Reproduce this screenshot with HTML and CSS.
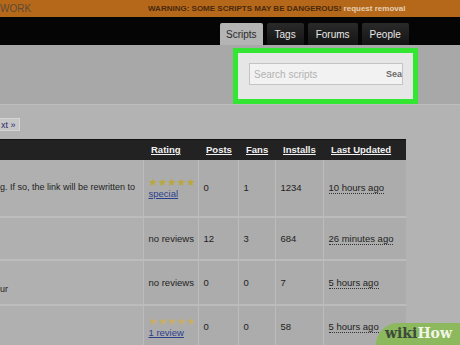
FILE: index.html
```html
<!DOCTYPE html>
<html lang="en">
<head>
  <meta charset="UTF-8">
  <title>Scripts</title>
  <link rel="stylesheet" href="styles.css">
</head>
<body>
  <!-- Warning bar -->
  <div class="topbar">
    <span class="site">WORK</span>
    <span class="warning">WARNING: SOME SCRIPTS MAY BE DANGEROUS! <a href="#" class="removal">request removal</a></span>
  </div>

  <!-- Navigation tabs -->
  <div class="nav">
    <a href="#" class="tab active">Scripts</a>
    <a href="#" class="tab">Tags</a>
    <a href="#" class="tab">Forums</a>
    <a href="#" class="tab">People</a>
  </div>

  <!-- Search -->
  <div class="search-band">
    <div class="highlight">
      <div class="search-box">
        <input type="text" class="search-input" placeholder="Search scripts">
        <span class="search-btn">Sea</span>
      </div>
    </div>
  </div>

  <div class="pager">
    <a href="#" class="next-btn">xt »</a>
  </div>

  <!-- Script listing -->
  <table class="scripts">
    <thead>
      <tr>
        <th class="col-desc"></th>
        <th class="col-rating"><a href="#">Rating</a></th>
        <th class="col-posts"><a href="#">Posts</a></th>
        <th class="col-fans"><a href="#">Fans</a></th>
        <th class="col-installs"><a href="#">Installs</a></th>
        <th class="col-updated"><a href="#">Last Updated</a></th>
      </tr>
    </thead>
    <tbody>
      <tr class="row-1">
        <td class="desc">g. If so, the link will be rewritten to</td>
        <td><span class="stars">★★★★★</span><br><a href="#">special</a></td>
        <td>0</td>
        <td>1</td>
        <td>1234</td>
        <td><abbr>10 hours ago</abbr></td>
      </tr>
      <tr class="row-2">
        <td class="desc"></td>
        <td>no reviews</td>
        <td>12</td>
        <td>3</td>
        <td>684</td>
        <td><abbr>26 minutes ago</abbr></td>
      </tr>
      <tr class="row-3">
        <td class="desc"><span class="desc-low">ur</span></td>
        <td>no reviews</td>
        <td>0</td>
        <td>0</td>
        <td>7</td>
        <td><abbr>5 hours ago</abbr></td>
      </tr>
      <tr class="row-4">
        <td class="desc"></td>
        <td><span class="stars pale">★★★★★</span><br><a href="#">1 review</a></td>
        <td>0</td>
        <td>0</td>
        <td>58</td>
        <td><abbr>5 hours ago</abbr></td>
      </tr>
    </tbody>
  </table>

  <div class="wikihow"><span class="wiki">wiki</span><span class="how">How</span></div>
</body>
</html>
```

FILE: styles.css
```css
* {
  margin: 0;
  padding: 0;
  box-sizing: border-box;
}

body {
  width: 460px;
  height: 345px;
  overflow: hidden;
  position: relative;
  font-family: "Liberation Sans", Arial, sans-serif;
  font-size: 9px;
  background: #b3b3b3;
  color: #1e1e1e;
}

a {
  color: inherit;
}

/* Warning bar */
.topbar {
  height: 17px;
  background: #b5681a;
  display: flex;
  align-items: center;
}

.site {
  color: #5e4a34;
  width: 148px;
  font-size: 10px;
}

.warning {
  color: #4a2a0c;
  font-weight: bold;
  font-size: 8px;
  white-space: nowrap;
}

.removal {
  color: #e6cfb4;
  text-decoration: none;
}

/* Navigation */
.nav {
  height: 28px;
  background: #050505;
  display: flex;
  align-items: flex-end;
  gap: 4px;
  padding-left: 220px;
}

.tab {
  height: 22px;
  padding: 0 8px;
  display: flex;
  align-items: center;
  background: linear-gradient(#2a2a2a, #141414);
  color: #e8e8e8;
  text-decoration: none;
  font-size: 10px;
  border-radius: 2px 2px 0 0;
}

.tab.active {
  background: #b4b4b4;
  color: #2a2a2a;
  padding: 0 6px;
}

/* Search */
.search-band {
  height: 60px;
  background: #a8a8a8;
  border-bottom: 1px solid #bdbdbd;
  padding: 3px 0 0 233px;
}

.highlight {
  width: 185px;
  height: 56px;
  border: 5px solid #33e633;
  background: #e6e6e6;
  padding: 10px 0 0 11px;
}

.search-box {
  width: 154px;
  height: 22px;
  background: #f2f2f2;
  border: 1px solid #c4c4c4;
  display: flex;
  align-items: center;
  overflow: hidden;
}

.search-input {
  width: 138px;
  height: 100%;
  border: none;
  background: none;
  padding-left: 4px;
  font-family: inherit;
  font-size: 10px;
  outline: none;
}

.search-input::placeholder {
  color: #b2b2b2;
}

.search-btn {
  color: #6a6a6a;
  font-weight: bold;
  font-size: 9px;
  white-space: nowrap;
}

/* Pager */
.pager {
  height: 34px;
  padding-top: 13px;
  display: flex;
}

.next-btn {
  height: 13px;
  display: flex;
  align-items: center;
  margin-left: -3px;
  padding: 0 3px;
  background: #c6c6c6;
  border: 1px solid #d4d4d4;
  color: #2b2b6e;
  text-decoration: none;
  font-size: 9px;
}

/* Table */
.scripts {
  width: 406px;
  border-collapse: collapse;
  table-layout: fixed;
}

.scripts th {
  height: 20px;
  background: #222;
  border-top: 1px solid #111;
  text-align: left;
  padding-left: 8px;
  font-size: 9.5px;
}

.scripts th a {
  color: #f2f2f2;
}

.col-desc { width: 143px; }
.col-rating { width: 55px; }
.col-posts { width: 40px; }
.col-fans { width: 37px; }
.col-installs { width: 48px; }
.col-updated { width: 83px; }

.scripts td {
  padding-left: 5px;
  vertical-align: middle;
  border-left: 1px solid #bcbcbc;
  border-bottom: 2px solid #bcbcbc;
  background: #acacac;
  white-space: nowrap;
  font-size: 9.5px;
  line-height: 11px;
}

.scripts td.desc {
  padding-left: 0;
  border-left: none;
  background: #b0b0b0;
  overflow: hidden;
  font-size: 9px;
}

.row-1 td { height: 57px; }
.row-2 td { height: 43px; }
.row-3 td { height: 45px; }
.row-4 td { height: 44px; }

.desc-low {
  display: block;
  padding-top: 14px;
}

.scripts td a {
  color: #2c3f8c;
}

.stars {
  font-family: "DejaVu Sans", sans-serif;
  color: #b9a83a;
  font-size: 10.5px;
  line-height: 10px;
}

.stars.pale {
  color: #c8ae66;
}

abbr {
  text-decoration: none;
  border-bottom: 1px dotted #333;
}

/* Watermark */
.wikihow {
  position: absolute;
  right: 0;
  bottom: 0;
  width: 84px;
  height: 22px;
  background: #8cb85e;
  border-top-left-radius: 24px;
  padding: 2px 0 0 9px;
  font-family: "DejaVu Serif", "Liberation Serif", serif;
  font-weight: bold;
  font-size: 14px;
}

.wiki {
  color: #3c4a3a;
}

.how {
  color: #f2f5e6;
}
```
